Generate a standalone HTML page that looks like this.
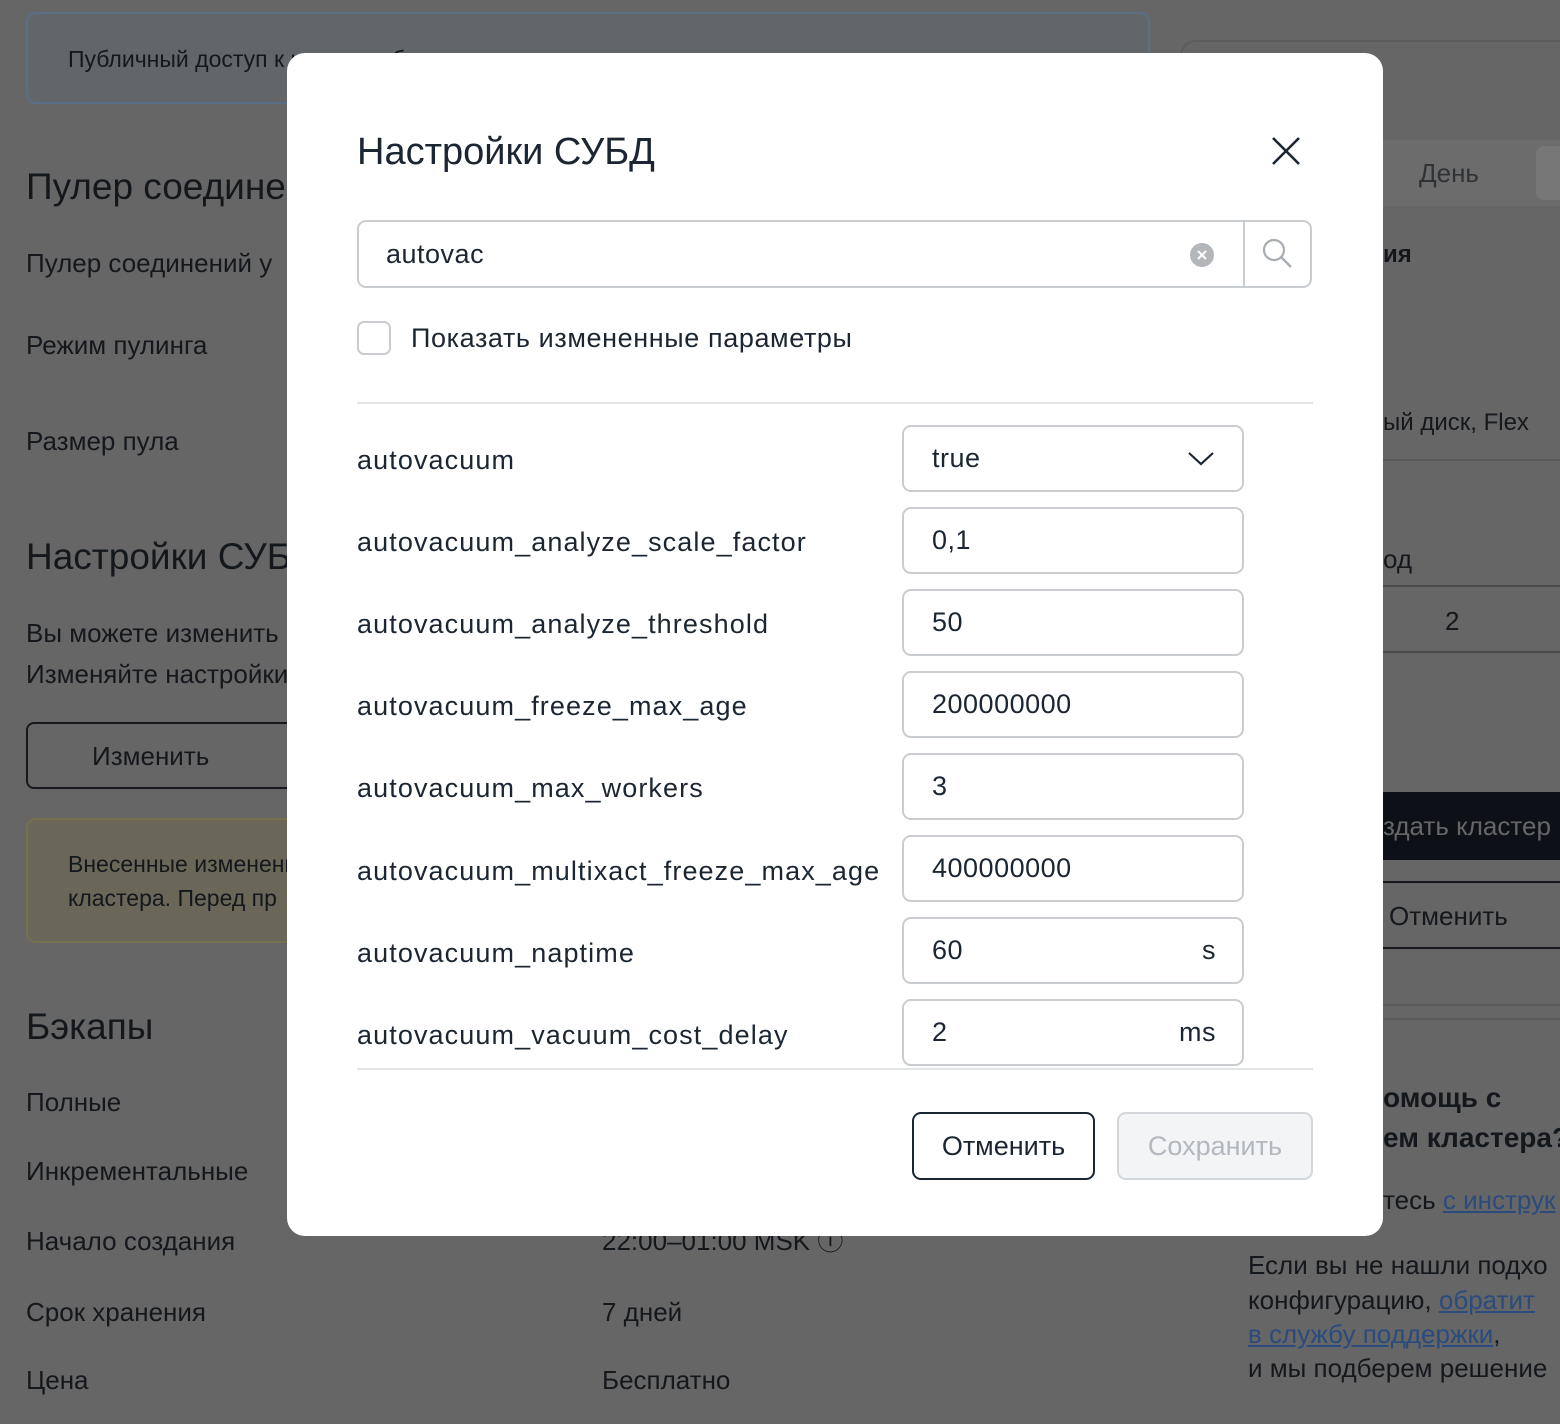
<!DOCTYPE html>
<html><head><meta charset="utf-8"><style>
*{margin:0;padding:0;box-sizing:border-box}
body{width:1560px;height:1424px;overflow:hidden;background:#666;font-family:"Liberation Sans",sans-serif;color:#15191d;position:relative}
.a{position:absolute;white-space:nowrap;line-height:1}
.bg{color:#14181c}
.m{position:absolute;left:287px;top:53px;width:1096px;height:1183px;background:#fff;border-radius:18px}
.lbl{position:absolute;left:70px;font-size:27px;color:#1b2632;line-height:1;white-space:nowrap;letter-spacing:1.1px}
.inp{position:absolute;left:615px;width:342px;height:67px;border:2px solid #c9cdd1;border-radius:9px;font-size:27px;color:#1b2632;padding:0 28px;line-height:63px;letter-spacing:0.5px}
.inp span{position:absolute;right:26px;top:0}
</style></head><body>
<div class="a" style="left:26px;top:12px;width:1124px;height:92px;border:2px solid #5a6e86;border-radius:10px;background:#626669"></div>
<div class="a bg" style="left:68px;top:48px;font-size:23px">Публичный доступ к кластеру будет</div>
<div class="a bg" style="left:26px;top:168px;font-size:37px">Пулер соединений</div>
<div class="a bg" style="left:26px;top:250px;font-size:26px">Пулер соединений у</div>
<div class="a bg" style="left:26px;top:332px;font-size:26px">Режим пулинга</div>
<div class="a bg" style="left:26px;top:428px;font-size:26px">Размер пула</div>
<div class="a bg" style="left:26px;top:538px;font-size:37px">Настройки СУБД</div>
<div class="a bg" style="left:26px;top:620px;font-size:26px">Вы можете изменить</div>
<div class="a bg" style="left:26px;top:661px;font-size:26px">Изменяйте настройки</div>
<div class="a" style="left:26px;top:722px;width:300px;height:67px;border:2px solid #15191d;border-radius:8px"></div>
<div class="a bg" style="left:92px;top:743px;font-size:26px">Изменить</div>
<div class="a" style="left:26px;top:818px;width:300px;height:125px;border:2px solid #77704f;border-radius:10px;background:#6a6759"></div>
<div class="a bg" style="left:68px;top:853px;font-size:23px">Внесенные изменения</div>
<div class="a bg" style="left:68px;top:887px;font-size:23px">кластера. Перед пр</div>
<div class="a bg" style="left:26px;top:1008px;font-size:37px">Бэкапы</div>
<div class="a bg" style="left:26px;top:1089px;font-size:26px">Полные</div>
<div class="a bg" style="left:26px;top:1158px;font-size:26px">Инкрементальные</div>
<div class="a bg" style="left:26px;top:1228px;font-size:26px">Начало создания</div>
<div class="a bg" style="left:602px;top:1228px;font-size:26px">22:00–01:00 MSK ⓘ</div>
<div class="a bg" style="left:26px;top:1299px;font-size:26px">Срок хранения</div>
<div class="a bg" style="left:602px;top:1299px;font-size:26px">7 дней</div>
<div class="a bg" style="left:26px;top:1367px;font-size:26px">Цена</div>
<div class="a bg" style="left:602px;top:1367px;font-size:26px">Бесплатно</div>
<div class="a" style="left:1180px;top:40px;width:400px;height:980px;border:2px solid #5c5c5c;border-radius:16px"></div>
<div class="a" style="left:1380px;top:140px;width:200px;height:66px;background:#6c6c6c"></div>
<div class="a" style="left:1536px;top:146px;width:40px;height:54px;background:#777;border-radius:8px"></div>
<div class="a" style="left:1419px;top:160px;font-size:26px;color:#303336">День</div>
<div class="a bg" style="left:1383px;top:243px;font-size:24px;font-weight:bold">ия</div>
<div class="a bg" style="left:1383px;top:411px;font-size:24px">ый диск, Flex</div>
<div class="a" style="left:1383px;top:459px;width:180px;height:2px;background:#5a5a5a"></div>
<div class="a bg" style="left:1383px;top:546px;font-size:26px">од</div>
<div class="a" style="left:1383px;top:585px;width:180px;height:2px;background:#4a4a4a"></div>
<div class="a bg" style="left:1445px;top:608px;font-size:26px">2</div>
<div class="a" style="left:1383px;top:651px;width:180px;height:2px;background:#4a4a4a"></div>
<div class="a" style="left:1383px;top:792px;width:180px;height:68px;background:#0d1117"></div>
<div class="a" style="left:1383px;top:813px;font-size:26px;color:#666">здать кластер</div>
<div class="a" style="left:1383px;top:881px;width:180px;height:68px;border-top:2px solid #15191d;border-bottom:2px solid #15191d"></div>
<div class="a bg" style="left:1389px;top:903px;font-size:26px">Отменить</div>
<div class="a" style="left:1383px;top:1004px;width:180px;height:2px;background:#5a5a5a"></div>
<div class="a bg" style="left:1383px;top:1084px;font-size:28px;font-weight:bold">омощь с</div>
<div class="a bg" style="left:1383px;top:1124px;font-size:28px;font-weight:bold">ем кластера?</div>
<div class="a bg" style="left:1383px;top:1187px;font-size:26px">тесь <u style="color:#2a4b7c">с инструк</u></div>
<div class="a bg" style="left:1248px;top:1252px;font-size:26px">Если вы не нашли подхо</div>
<div class="a bg" style="left:1248px;top:1287px;font-size:26px">конфигурацию, <u style="color:#2a4b7c">обратит</u></div>
<div class="a bg" style="left:1248px;top:1321px;font-size:26px"><u style="color:#2a4b7c">в службу поддержки</u>,</div>
<div class="a bg" style="left:1248px;top:1355px;font-size:26px">и мы подберем решение</div>
<div class="m">
 <div class="a" style="left:70px;top:80px;font-size:38px;color:#1b2632">Настройки СУБД</div>
 <svg class="a" style="left:984px;top:83px" width="30" height="30" viewBox="0 0 30 30"><path d="M2 2L28 28M28 2L2 28" stroke="#1b2632" stroke-width="2.6" fill="none"/></svg>
 <div class="a" style="left:70px;top:167px;width:955px;height:68px;border:2px solid #c9cdd1;border-radius:9px"></div>
 <div class="a" style="left:956px;top:168px;width:2px;height:66px;background:#c9cdd1"></div>
 <div class="a" style="left:99px;top:188px;font-size:27px;color:#1b2632;letter-spacing:0.5px">autovac</div>
 <svg class="a" style="left:902px;top:189px" width="26" height="26" viewBox="0 0 26 26"><circle cx="13" cy="13" r="12" fill="#b3b7bb"/><path d="M9 9L17 17M17 9L9 17" stroke="#fff" stroke-width="2"/></svg>
 <svg class="a" style="left:973px;top:183px" width="34" height="34" viewBox="0 0 34 34"><circle cx="14" cy="14" r="10" stroke="#a8adb2" stroke-width="2.2" fill="none"/><path d="M21.5 21.5L31 31" stroke="#a8adb2" stroke-width="2.4"/></svg>
 <div class="a" style="left:70px;top:268px;width:34px;height:34px;border:2px solid #c9cdd1;border-radius:7px"></div>
 <div class="a" style="left:124px;top:272px;font-size:27px;color:#1b2632;letter-spacing:0.6px">Показать измененные параметры</div>
 <div class="a" style="left:70px;top:349px;width:956px;height:2px;background:#e2e5e8"></div>
 <div class="lbl" style="top:394px">autovacuum</div>
 <div class="inp" style="top:372px">true<svg style="position:absolute;right:28px;top:24px" width="26" height="16" viewBox="0 0 26 16"><path d="M1 2L13 13L25 2" stroke="#1b2632" stroke-width="2.2" fill="none"/></svg></div>
 <div class="lbl" style="top:476px">autovacuum_analyze_scale_factor</div>
 <div class="inp" style="top:454px">0,1</div>
 <div class="lbl" style="top:558px">autovacuum_analyze_threshold</div>
 <div class="inp" style="top:536px">50</div>
 <div class="lbl" style="top:640px">autovacuum_freeze_max_age</div>
 <div class="inp" style="top:618px">200000000</div>
 <div class="lbl" style="top:722px">autovacuum_max_workers</div>
 <div class="inp" style="top:700px">3</div>
 <div class="lbl" style="top:805px">autovacuum_multixact_freeze_max_age</div>
 <div class="inp" style="top:782px">400000000</div>
 <div class="lbl" style="top:887px">autovacuum_naptime</div>
 <div class="inp" style="top:864px">60<span>s</span></div>
 <div class="lbl" style="top:969px">autovacuum_vacuum_cost_delay</div>
 <div class="inp" style="top:946px">2<span>ms</span></div>
 <div class="a" style="left:70px;top:1015px;width:956px;height:2px;background:#e2e5e8"></div>
 <div class="a" style="left:625px;top:1059px;width:183px;height:68px;border:2px solid #1b2632;border-radius:9px;font-size:27px;color:#1b2632;text-align:center;line-height:64px">Отменить</div>
 <div class="a" style="left:830px;top:1059px;width:196px;height:68px;border:2px solid #d3d7db;background:#f3f4f5;border-radius:9px;font-size:27px;color:#b2b8be;text-align:center;line-height:64px">Сохранить</div>
</div>
</body></html>
